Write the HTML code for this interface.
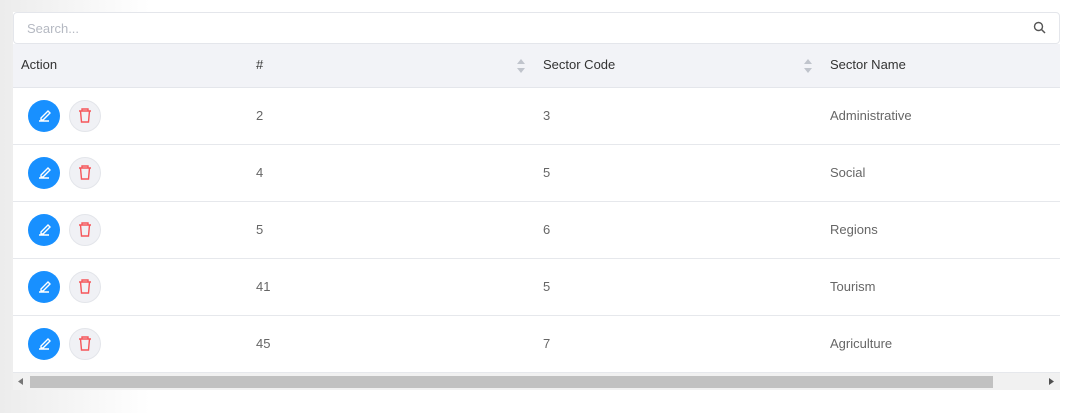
<!DOCTYPE html>
<html><head><style>
body{margin:0;width:1079px;height:413px;overflow:hidden;background:linear-gradient(90deg,#ececec 0,#fff 150px);font-family:"Liberation Sans",sans-serif;position:relative}
.abs{position:absolute}
.wrap{position:absolute;left:13px;top:12px;width:1047px;height:378px;background:#fff}
.search{position:absolute;left:0;top:0;width:1045px;height:30px;border:1px solid #e4e6eb;border-radius:4px;background:#fff}
.search span{position:absolute;left:13px;top:8px;font-size:13px;color:#b5b9c2}
.head{position:absolute;left:0;top:32px;width:1047px;height:43px;background:#f2f3f7;border-bottom:1px solid #e4e6eb}
.t{position:absolute;font-size:13px;color:#333}
.row{position:absolute;left:0;width:1047px;height:56px;border-bottom:1px solid #e6e8ec}
.c{position:absolute;font-size:13px;color:#666;top:20px}
.b1{position:absolute;left:15px;top:12px;width:32px;height:32px;border-radius:50%;background:#1890ff}
.b2{position:absolute;left:56px;top:12px;width:30px;height:30px;border-radius:50%;background:#f0f1f5;border:1px solid #e3e5ea}
.sort{position:absolute;width:8px;height:14px}
</style></head><body>
<div class="wrap">
<div class="search"><span>Search...</span>
<svg class="abs" style="left:1019px;top:8px" width="14" height="14" viewBox="0 0 14 14"><circle cx="5.5" cy="5.5" r="4" fill="none" stroke="#555" stroke-width="1.4"/><path d="M8.5 8.5L12 12" stroke="#555" stroke-width="1.5"/></svg></div>
<div class="head">
<div class="t" style="left:8px;top:13px">Action</div>
<div class="t" style="left:243px;top:13px">#</div>
<svg class="sort" style="left:504px;top:15px" viewBox="0 0 8 14"><path d="M0 5L4 0L8 5Z M0 9L4 14L8 9Z" fill="#c0c4cc"/></svg>
<div class="t" style="left:530px;top:13px">Sector Code</div>
<svg class="sort" style="left:791px;top:15px" viewBox="0 0 8 14"><path d="M0 5L4 0L8 5Z M0 9L4 14L8 9Z" fill="#c0c4cc"/></svg>
<div class="t" style="left:817px;top:13px">Sector Name</div>
</div>
<!--rows-->
<div class="row" style="top:76px"><div class="b1"><svg width="32" height="32"><path d="M11 21h10M13 18l7-7 2 2-7 7h-2z" stroke="#fff" stroke-width="1.4" fill="none"/></svg></div><div class="b2"><svg width="30" height="30"><path d="M9 10h12M12 10V8h6v2M10.5 10l1 11h7l1-11" stroke="#f5565a" stroke-width="1.4" fill="none"/></svg></div><div class="c" style="left:243px">2</div><div class="c" style="left:530px">3</div><div class="c" style="left:817px">Administrative</div></div>
<div class="row" style="top:133px"><div class="b1"><svg width="32" height="32"><path d="M11 21h10M13 18l7-7 2 2-7 7h-2z" stroke="#fff" stroke-width="1.4" fill="none"/></svg></div><div class="b2"><svg width="30" height="30"><path d="M9 10h12M12 10V8h6v2M10.5 10l1 11h7l1-11" stroke="#f5565a" stroke-width="1.4" fill="none"/></svg></div><div class="c" style="left:243px">4</div><div class="c" style="left:530px">5</div><div class="c" style="left:817px">Social</div></div>
<div class="row" style="top:190px"><div class="b1"><svg width="32" height="32"><path d="M11 21h10M13 18l7-7 2 2-7 7h-2z" stroke="#fff" stroke-width="1.4" fill="none"/></svg></div><div class="b2"><svg width="30" height="30"><path d="M9 10h12M12 10V8h6v2M10.5 10l1 11h7l1-11" stroke="#f5565a" stroke-width="1.4" fill="none"/></svg></div><div class="c" style="left:243px">5</div><div class="c" style="left:530px">6</div><div class="c" style="left:817px">Regions</div></div>
<div class="row" style="top:247px"><div class="b1"><svg width="32" height="32"><path d="M11 21h10M13 18l7-7 2 2-7 7h-2z" stroke="#fff" stroke-width="1.4" fill="none"/></svg></div><div class="b2"><svg width="30" height="30"><path d="M9 10h12M12 10V8h6v2M10.5 10l1 11h7l1-11" stroke="#f5565a" stroke-width="1.4" fill="none"/></svg></div><div class="c" style="left:243px">41</div><div class="c" style="left:530px">5</div><div class="c" style="left:817px">Tourism</div></div>
<div class="row" style="top:304px"><div class="b1"><svg width="32" height="32"><path d="M11 21h10M13 18l7-7 2 2-7 7h-2z" stroke="#fff" stroke-width="1.4" fill="none"/></svg></div><div class="b2"><svg width="30" height="30"><path d="M9 10h12M12 10V8h6v2M10.5 10l1 11h7l1-11" stroke="#f5565a" stroke-width="1.4" fill="none"/></svg></div><div class="c" style="left:243px">45</div><div class="c" style="left:530px">7</div><div class="c" style="left:817px">Agriculture</div></div>
<div class="abs" style="left:0;top:361px;width:1047px;height:17px;background:#f1f1f1">
<svg class="abs" style="left:5px;top:5px" width="5" height="7"><path d="M5 0L0 3.5L5 7Z" fill="#777"/></svg>
<div class="abs" style="left:17px;top:3px;width:963px;height:12px;background:#c1c1c1"></div>
<svg class="abs" style="left:1036px;top:5px" width="5" height="7"><path d="M0 0L5 3.5L0 7Z" fill="#505050"/></svg>
</div>
</div>
</body></html>
